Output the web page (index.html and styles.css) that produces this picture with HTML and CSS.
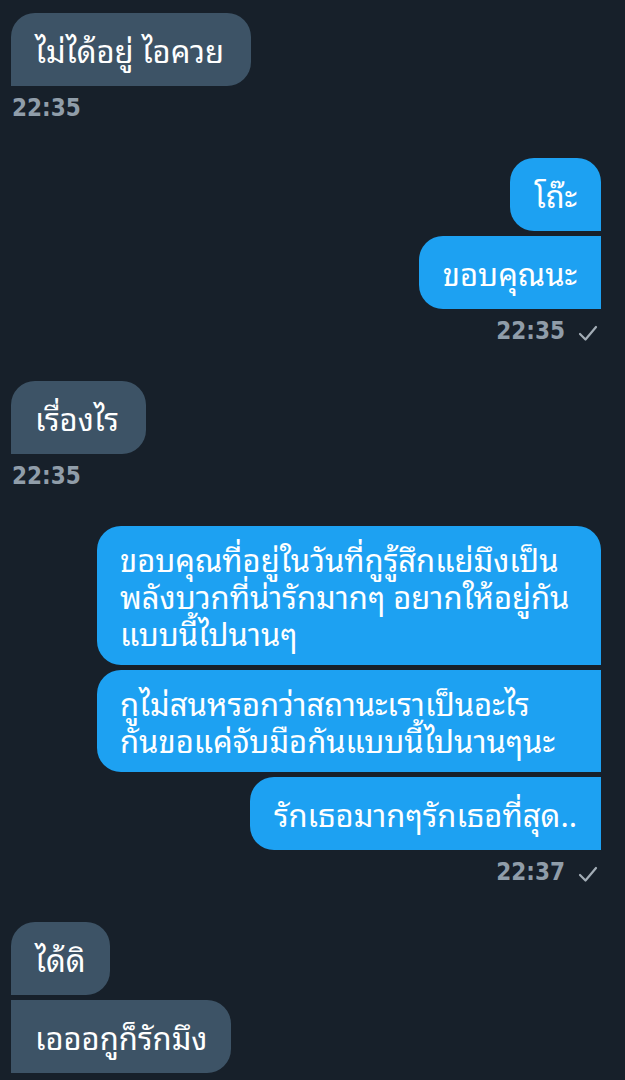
FILE: index.html
```html
<!DOCTYPE html>
<html lang="th">
<head>
  <meta charset="UTF-8">
  <title>ข้อความ</title>
  <link rel="stylesheet" href="styles.css">
</head>
<body>
<div class="chat">

  <div class="group in">
    <div class="bubble only">ไม่ได้อยู่ ไอควย</div>
    <div class="meta">22:35</div>
  </div>

  <div class="group out">
    <div class="bubble first">โถ๊ะ</div>
    <div class="bubble last">ขอบคุณนะ</div>
    <div class="meta">22:35 <svg class="tick" width="20" height="18" viewBox="0 0 20 18"><polyline points="2,10 7.5,15.5 18,3" fill="none" stroke="currentColor" stroke-width="2.2" stroke-linecap="round" stroke-linejoin="round"/></svg></div>
  </div>

  <div class="group in">
    <div class="bubble only">เรื่องไร</div>
    <div class="meta">22:35</div>
  </div>

  <div class="group out">
    <div class="bubble first wide">ขอบคุณที่อยู่ในวันที่กูรู้สึกแย่มึงเป็น<br>พลังบวกที่น่ารักมากๆ อยากให้อยู่กัน<br>แบบนี้ไปนานๆ</div>
    <div class="bubble wide">กูไม่สนหรอกว่าสถานะเราเป็นอะไร<br>กันขอแค่จับมือกันแบบนี้ไปนานๆนะ</div>
    <div class="bubble last">รักเธอมากๆรักเธอที่สุด..</div>
    <div class="meta">22:37 <svg class="tick" width="20" height="18" viewBox="0 0 20 18"><polyline points="2,10 7.5,15.5 18,3" fill="none" stroke="currentColor" stroke-width="2.2" stroke-linecap="round" stroke-linejoin="round"/></svg></div>
  </div>

  <div class="group in">
    <div class="bubble first">ได้ดิ</div>
    <div class="bubble last">เอออกูก็รักมึง</div>
  </div>

</div>
</body>
</html>
```

FILE: styles.css
```css
* { box-sizing: border-box; }
body {
  margin: 0;
  background: #17202a;
  font-family: "Noto Sans Thai Looped", "Noto Sans Thai", "Noto Sans", sans-serif;
  color: #fff;
}
.chat {
  padding: 13px 24px 0 11px;
  display: flex;
  flex-direction: column;
}
.group {
  display: flex;
  flex-direction: column;
  gap: 5px;
  margin-bottom: 37px;
}
.group.in { align-items: flex-start; }
.group.out { align-items: flex-end; }

.bubble {
  max-width: 504px;
  padding: 18px 24px;
  font-size: 31px;
  line-height: 37px;
  border-radius: 24px;
  white-space: nowrap;
}
.bubble.only { padding-right: 27px; }
.bubble.wide {
  width: 504px;
  padding: 14px 23px;
}
.in .bubble {
  background: #3d5366;
  border-top-left-radius: 0;
  border-bottom-left-radius: 0;
}
.in .bubble.first,
.in .bubble.only { border-top-left-radius: 24px; }

.out .bubble {
  background: #1da1f2;
  border-top-right-radius: 0;
  border-bottom-right-radius: 0;
}
.out .bubble.first { border-top-right-radius: 24px; }

.meta {
  margin-top: 4px;
  height: 26px;
  display: flex;
  align-items: center;
  gap: 13px;
  font-family: "DejaVu Sans Condensed", "DejaVu Sans", sans-serif;
  font-weight: bold;
  font-size: 24px;
  color: #909da9;
}
.in .meta { padding-left: 1px; }
.out .meta { padding-right: 3px; }
.tick { color: #a3adb6; margin-top: 4px; }
```
